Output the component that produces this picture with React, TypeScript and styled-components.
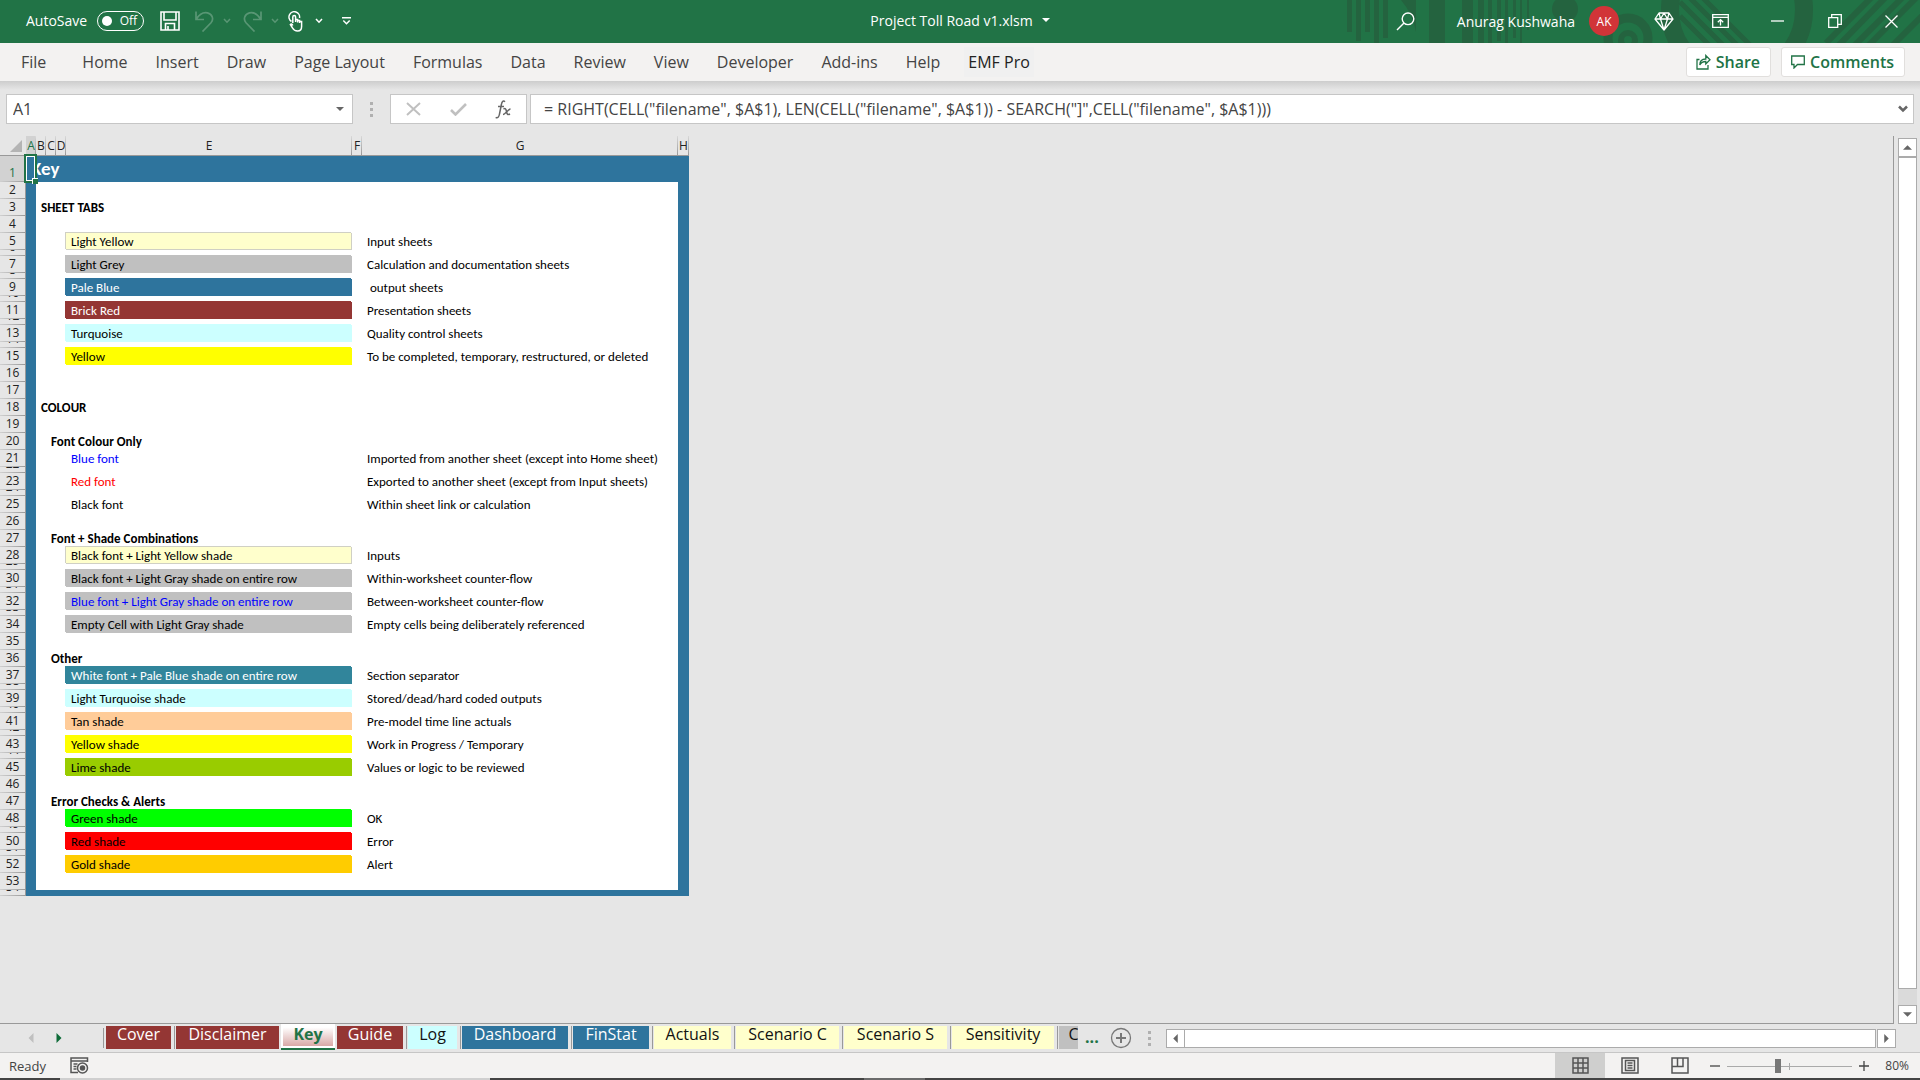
import React from "react";
import styled, { createGlobalStyle, css } from "styled-components";

const green = "#217346";
const blue = "#2e749d";
const brick = "#943634";
const cream = "#ffffcc";
const ui = `"Open Sans", "Noto Sans", sans-serif`;
const cellFont = `Calibri, Carlito, Lato, sans-serif`;

const Global = createGlobalStyle`
  *, *::before, *::after { box-sizing: border-box; }
  body { margin: 0; background: #e6e6e6; font-family: ${ui}; }
  button, input { font-family: inherit; margin: 0; padding: 0; border: 0; background: none; color: inherit; outline: none; }
  svg { display: block; flex: none; }
`;

const Window = styled.div`
  display: flex;
  flex-direction: column;
  height: 100vh;
  overflow: hidden;
`;

/* ---------- title bar ---------- */
const TitleBar = styled.header`
  display: flex;
  flex: none;
  height: 43px;
  background: ${green};
  color: #fff;
  font-size: 14px;
  position: relative;
`;
const Pattern = styled.svg`
  position: absolute;
  top: 0;
  right: 0;
`;
const TitleSide = styled.div<{ $end?: boolean }>`
  position: relative;
  display: flex;
  flex: 1 1 0;
  align-items: center;
  justify-content: ${(p) => (p.$end ? "flex-end" : "flex-start")};
  padding-bottom: 1px;
`;
const AutoSave = styled.label`
  display: flex;
  align-items: center;
  gap: 10px;
  padding-bottom: 1px;
  margin: 0 16px 0 26px;
`;
const Switch = styled.span`
  display: flex;
  align-items: center;
  justify-content: space-between;
  width: 47px;
  height: 20px;
  padding: 0 6px 0 4px;
  border: 1px solid #fff;
  border-radius: 10px;
  font-size: 12px;
`;
const HiddenCheck = styled.input`
  appearance: none;
  width: 10px;
  height: 10px;
  border-radius: 50%;
  background: #fff;
`;
const QuickButton = styled.button<{ $gap?: number; $dim?: boolean }>`
  display: flex;
  align-items: center;
  gap: 9px;
  height: 32px;
  margin-left: ${(p) => p.$gap || 0}px;
  opacity: ${(p) => (p.$dim ? 0.25 : 1)};
`;
const DocTitle = styled.button`
  position: relative;
  display: flex;
  align-items: center;
  gap: 9px;
  padding-bottom: 3px;
  font-size: 14px;
`;
const Account = styled.button`
  display: flex;
  align-items: center;
  gap: 14px;
  margin: 0 16px 0 42px;
  font-size: 14px;
`;
const Avatar = styled.span`
  display: flex;
  align-items: center;
  justify-content: center;
  width: 30px;
  height: 30px;
  border-radius: 50%;
  background: #d13438;
  font-size: 12px;
`;
const WindowButton = styled.button`
  display: flex;
  align-items: center;
  justify-content: center;
  width: 57px;
  height: 42px;
`;

/* ---------- ribbon ---------- */
const Ribbon = styled.nav`
  display: flex;
  flex: none;
  align-items: center;
  height: 38px;
  padding: 0 15px 0 7px;
  background: #f3f2f1;
`;
const RibbonTab = styled.button<{ $first?: boolean; $plugin?: boolean }>`
  height: 30px;
  padding: 0 14px;
  color: #444;
  font-size: 16px;
  line-height: 28px;
  ${(p) => p.$first && css`margin-right: 8px;`}
  ${(p) => p.$plugin && css`
    margin-left: 10px;
    padding: 0 4px;
    color: #222;
    background: #f0f0f0;
  `}
`;
const Spacer = styled.span`
  flex: 1;
`;
const RibbonAction = styled.button`
  display: flex;
  align-items: center;
  gap: 5px;
  height: 30px;
  margin-left: 10px;
  padding: 0 10px 1px 9px;
  border: 1px solid #e1dfdd;
  border-radius: 3px;
  background: #fff;
  color: ${green};
  font-size: 16px;
  font-weight: 600;
`;

/* ---------- formula bar ---------- */
const FormulaRow = styled.div`
  display: flex;
  flex: none;
  padding: 13px 6px 12px;
  background: linear-gradient(#cdcdcd, #e6e6e6 9px);
`;
const Box = styled.div<{ $w?: number }>`
  display: flex;
  align-items: center;
  height: 30px;
  border: 1px solid #c6c6c6;
  background: #fff;
  ${(p) => (p.$w ? css`width: ${p.$w}px;` : css`flex: 1;`)}
`;
const FormulaBox = styled(Box)`
  margin-left: 3px;
`;
const BoxInput = styled.input<{ $pad: number }>`
  flex: 1;
  min-width: 0;
  height: 28px;
  padding: 0 ${(p) => p.$pad}px;
  color: #444;
  font-size: 16px;
`;
const BoxButton = styled.button<{ $w: number }>`
  display: flex;
  align-items: center;
  justify-content: center;
  width: ${(p) => p.$w}px;
  height: 28px;
`;
const Grip = styled.span<{ $w: number }>`
  display: flex;
  flex-direction: column;
  align-items: center;
  justify-content: center;
  gap: 3px;
  width: ${(p) => p.$w}px;
  &::before, &::after, & > i { content: ""; width: 3px; height: 3px; background: #b0b0b0; }
`;

/* ---------- worksheet ---------- */
const Body = styled.main`
  display: flex;
  flex: 1;
  min-height: 0;
  padding-right: 3px;
`;
const Pane = styled.div`
  flex: 1;
  min-width: 0;
  overflow: hidden;
  border-right: 1px solid #999;
  border-bottom: 1px solid #999;
`;
const SheetHolder = styled.div`
  position: relative;
`;
const Sheet = styled.table`
  width: 689px;
  table-layout: fixed;
  border-collapse: separate;
  border-spacing: 0;
  color: #000;
  font-family: ${cellFont};
  font-size: 13px;
  line-height: 17px;
  td, th { padding: 0; font-weight: 400; text-align: left; white-space: nowrap; vertical-align: bottom; }
`;
const ColHead = styled.th<{ $on?: boolean }>`
  height: 20px;
  font-family: ${ui};
  font-size: 12px;
  border-bottom: 1px solid #999;
  color: ${(p) => (p.$on ? green : "#222")};
  background: linear-gradient(#d8d8d8, #999) right / 1px 100% no-repeat ${(p) => (p.$on ? "#d2d2d2" : "#e6e6e6")};
  & > span { display: flex; justify-content: center; line-height: 18px; }
`;
const Corner = styled.th`
  height: 20px;
  border-bottom: 1px solid #999;
  & > svg { margin: 0 0 3px 10px; }
`;
const RowHead = styled.th<{ $on?: boolean }>`
  font-family: ${ui};
  font-size: 12px;
  color: ${(p) => (p.$on ? green : "#222")};
  border-right: 1px solid #999;
  background: linear-gradient(90deg, #d0d0d0, #9a9a9a) bottom / 100% 1px no-repeat ${(p) => (p.$on ? "#d2d2d2" : "#e6e6e6")};
`;
const RowNumber = styled.span<{ $h: number }>`
  display: flex;
  align-items: flex-end;
  justify-content: center;
  height: ${(p) => p.$h}px;
  overflow: hidden;
  line-height: 18px;
`;
const Blue = styled.td`
  background: ${blue};
`;
const SheetTitle = styled(Blue)`
  && { padding: 0 0 3px 5px; font-weight: 700; }
  color: #fff;
  font-size: 19px;
  line-height: 20px;
`;
const White = styled.td`
  background: #fff;
`;
const Heading = styled(White)`
  && { padding-left: 5px; font-weight: 700; }
`;
const Swatch = styled.td<{ $bg: string; $fg: string; $line?: string }>`
  && { padding-left: 5px; }
  background: ${(p) => p.$bg};
  color: ${(p) => p.$fg};
  box-shadow: ${(p) =>
    p.$bg === "#fff" ? "none" : `-1px -1px 0 ${p.$line || p.$bg}, inset -1px -1px 0 ${p.$line || p.$bg}`};
`;
const Note = styled(White)`
  && { padding-left: 5px; white-space: pre; }
`;
const Selection = styled.div`
  position: absolute;
  left: 24px;
  top: 18px;
  width: 13px;
  height: 29px;
  border: 2px solid ${green};
  background: ${blue};
  box-shadow: inset 0 0 0 1px #fff;
  &::after {
    content: "";
    position: absolute;
    right: -3px;
    bottom: -3px;
    width: 6px;
    height: 6px;
    background: ${green};
    border: solid #fff;
    border-width: 1px 0 0 1px;
  }
`;

/* ---------- scroll bars ---------- */
const VScroll = styled.div`
  display: flex;
  flex-direction: column;
  width: 19px;
  margin: 2px 0 0 4px;
  background: #dadada;
`;
const ScrollButton = styled.button`
  display: flex;
  flex: none;
  align-items: center;
  justify-content: center;
  width: 19px;
  height: 19px;
  border: 1px solid #ababab;
  background: #fff;
`;
const VThumb = styled.div`
  flex: 1;
  margin-bottom: 16px;
  border: 1px solid #ababab;
  background: #fff;
`;
const HScroll = styled.div`
  display: flex;
  flex: 1;
  gap: 1px;
`;
const HThumb = styled.div`
  flex: 1;
  margin-left: -2px;
  border: 1px solid #ababab;
  background: #fff;
`;

/* ---------- sheet tabs ---------- */
const TabRow = styled.div`
  display: flex;
  flex: none;
  align-items: center;
  height: 29px;
  padding-right: 24px;
  border-bottom: 1px solid #c6c6c6;
`;
const TabNav = styled.div`
  display: flex;
  width: 104px;
  padding-left: 17px;
  border-right: 1px solid #999;
`;
const TabArrow = styled.button`
  display: flex;
  align-items: center;
  justify-content: center;
  width: 28px;
  height: 20px;
`;
const Tabs = styled.div`
  display: flex;
  width: 974px;
  height: 29px;
  overflow: hidden;
`;
const Tab = styled.button<{ $bg: string; $fg: string; $w: number }>`
  flex: none;
  width: ${(p) => p.$w}px;
  height: 23px;
  margin: 2px 3px 0 2px;
  padding-bottom: 5px;
  background: ${(p) => p.$bg};
  color: ${(p) => p.$fg};
  font-size: 16px;
  line-height: 17px;
  box-shadow: 3px 0 0 #e6e6e6, 4px 0 0 #999;
`;
const ActiveTab = styled(Tab)`
  height: 24px;
  margin: 0 0 0 -1px;
  padding-bottom: 1px;
  border: solid #fff;
  border-width: 0 2px 2px;
  background: linear-gradient(#fff 15%, #d9a9a7);
  color: ${green};
  font-weight: 700;
  box-shadow: 0 2px 0 ${green};
`;
const More = styled.span`
  width: 32px;
  padding: 0 0 2px 7px;
  color: ${green};
  font-size: 16px;
  font-weight: 700;
`;
const AddSheet = styled.button`
  width: 22px;
  height: 22px;
`;

/* ---------- status bar ---------- */
const Status = styled.footer`
  display: flex;
  flex: none;
  align-items: center;
  height: 25px;
  padding: 0 11px 0 9px;
  background: #f3f2f1;
  color: #444;
  font-size: 13px;
`;
const MacroButton = styled.button`
  margin-left: 24px;
`;
const ViewButton = styled.button<{ $on?: boolean }>`
  display: flex;
  align-items: center;
  justify-content: center;
  width: 50px;
  height: 25px;
  background: ${(p) => (p.$on ? "#cfcfce" : "none")};
`;
const ZoomStep = styled.button`
  display: flex;
  align-items: center;
  justify-content: center;
  width: 19px;
  height: 24px;
`;
const Zoom = styled.input`
  appearance: none;
  width: 125px;
  height: 14px;
  margin: 0 2px 0 3px;
  background:
    linear-gradient(#aaa, #aaa) 62px 4px / 1px 7px no-repeat,
    linear-gradient(#aaa, #aaa) 0 7px / 100% 1px no-repeat;
  &::-webkit-slider-thumb {
    appearance: none;
    width: 6px;
    height: 14px;
    background: #777;
  }
`;
const ZoomLabel = styled.output`
  width: 36px;
  font-size: 12px;
  text-align: right;
`;
const Taskbar = styled.div`
  flex: none;
  height: 2px;
  background: linear-gradient(90deg, #444 60px, #cfcfcf 60px 490px, #444 490px 864px, #6b6b6b 864px 925px, #444 925px);
`;

/* ---------- data ---------- */
type Row = { n: number; b?: string; c?: string; e?: string; g?: string; bg?: string; fg?: string; line?: string; thin?: boolean };

const grey = "#c0c0c0";
const content: Record<number, Omit<Row, "n">> = {
  3: { b: "SHEET TABS" },
  5: { e: "Light Yellow", g: "Input sheets", bg: cream, line: "#d0d0c4" },
  7: { e: "Light Grey", g: "Calculation and documentation sheets", bg: grey },
  9: { e: "Pale Blue", g: " output sheets", bg: blue, fg: "#fff" },
  11: { e: "Brick Red", g: "Presentation sheets", bg: brick, fg: "#fff" },
  13: { e: "Turquoise", g: "Quality control sheets", bg: "#ccffff" },
  15: { e: "Yellow", g: "To be completed, temporary, restructured, or deleted", bg: "#ffff00" },
  18: { b: "COLOUR" },
  20: { c: "Font Colour Only" },
  21: { e: "Blue font", g: "Imported from another sheet (except into Home sheet)", fg: "#0000ff" },
  23: { e: "Red font", g: "Exported to another sheet (except from Input sheets)", fg: "#ff0000" },
  25: { e: "Black font", g: "Within sheet link or calculation" },
  27: { c: "Font + Shade Combinations" },
  28: { e: "Black font + Light Yellow shade", g: "Inputs", bg: cream, line: "#d0d0c4" },
  30: { e: "Black font + Light Gray shade on entire row", g: "Within-worksheet counter-flow", bg: grey },
  32: { e: "Blue font + Light Gray shade on entire row", g: "Between-worksheet counter-flow", bg: grey, fg: "#0000ff" },
  34: { e: "Empty Cell with Light Gray shade", g: "Empty cells being deliberately referenced", bg: grey },
  36: { c: "Other" },
  37: { e: "White font + Pale Blue shade on entire row", g: "Section separator", bg: "#31859b", fg: "#fff" },
  39: { e: "Light Turquoise shade", g: "Stored/dead/hard coded outputs", bg: "#ccffff" },
  41: { e: "Tan shade", g: "Pre-model time line actuals", bg: "#ffcc99" },
  43: { e: "Yellow shade", g: "Work in Progress / Temporary", bg: "#ffff00" },
  45: { e: "Lime shade", g: "Values or logic to be reviewed", bg: "#99cc00" },
  47: { c: "Error Checks & Alerts" },
  48: { e: "Green shade", g: "OK", bg: "#00ff00" },
  50: { e: "Red shade", g: "Error", bg: "#ff0000" },
  52: { e: "Gold shade", g: "Alert", bg: "#ffcc00" },
};
const thinRows = new Set([6, 8, 10, 12, 14, 22, 24, 29, 31, 33, 38, 40, 42, 44, 49, 51]);
const rows: Row[] = Array.from({ length: 52 }, (_, i) => ({ n: i + 2, thin: thinRows.has(i + 2), ...content[i + 2] }));

const ribbonTabs = ["File", "Home", "Insert", "Draw", "Page Layout", "Formulas", "Data", "Review", "View", "Developer", "Add-ins", "Help", "EMF Pro"];

const sheetTabs = [
  { name: "Cover", bg: brick, fg: "#fff", w: 65 },
  { name: "Disclaimer", bg: brick, fg: "#fff", w: 103 },
  { name: "Key", bg: "#fff", fg: green, w: 54 },
  { name: "Guide", bg: brick, fg: "#fff", w: 66 },
  { name: "Log", bg: "#ccffff", fg: "#111", w: 49 },
  { name: "Dashboard", bg: blue, fg: "#fff", w: 106 },
  { name: "FinStat", bg: blue, fg: "#fff", w: 76 },
  { name: "Actuals", bg: cream, fg: "#111", w: 77 },
  { name: "Scenario C", bg: cream, fg: "#111", w: 103 },
  { name: "Scenario S", bg: cream, fg: "#111", w: 103 },
  { name: "Sensitivity", bg: cream, fg: "#111", w: 102 },
  { name: "C", bg: grey, fg: "#111", w: 29 },
];

/* ---------- icons ---------- */
const Chevron = ({ color = "#fff" }: { color?: string }) => (
  <svg width="8" height="6" viewBox="0 0 8 6" fill="none" stroke={color} strokeWidth="1.5"><path d="M1 1l3 3.2L7 1" /></svg>
);
const Triangle = ({ dir, color = "#666", size = 10 }: { dir: "up" | "down" | "left" | "right"; color?: string; size?: number }) => {
  const d = { up: "M0 7.5h10L5 2.5z", down: "M0 2.5h10L5 7.5z", left: "M7.5 0v10L2.5 5z", right: "M2.5 0v10L7.5 5z" }[dir];
  return <svg width={size} height={size} viewBox="0 0 10 10" fill={color}><path d={d} /></svg>;
};
const UndoArrow = ({ flip }: { flip?: boolean }) => (
  <svg width="19" height="21" viewBox="0 0 19 21" fill="none" stroke="#fff" strokeWidth="1.700">
    <path transform={flip ? "matrix(-1 0 0 1 19 0)" : undefined} d="M1 .5v8h8M1.500 8C4.500 3 8.500 1 12.500 1.800c5 1.200 6.500 6.500 3.500 10L7.500 20.500" />
  </svg>
);

const TitlePattern = () => (
  <Pattern width="580" height="43" viewBox="1340 0 580 43" fill="#24633f" stroke="none" aria-hidden="true">
    <path d="M1347 0h5v32h-5zM1356 0h5v41h-5zM1365 0h5v32h-5zM1374 0h5v43h-5zM1383 0h5v38h-5z" />
    <path d="M1401 0h15v32q-3-18-15-32zM1429 0h16v43h-16zM1462 0h11v43h-11zM1478 0h6v43h-6zM1488 0h4v43h-4zM1497 0h4v41h-4zM1505 0h3v43h-3zM1513 0h3v38h-3zM1520 0h2v43h-2zM1527 0h2v30h-2z" />
    <circle cx="1565" cy="9" r="13" />
    <g fill="none" stroke="#24633f">
      <circle cx="1628" cy="38" r="20" strokeWidth="9" />
      <circle cx="1628" cy="40" r="7" strokeWidth="6" />
      <circle cx="1737" cy="10" r="67" strokeWidth="18" />
      <path strokeWidth="5" d="M1680 16l34 34M1680 2l44 44M1690-2l48 48M1703-2l48 48" />
      <path strokeWidth="6" d="M1826 43l45-45M1838 46l47-48M1854 46l48-48M1868 46l48-48M1892 46l40-40" />
    </g>
  </Pattern>
);

const SheetGrid = () => (
  <Sheet>
    <colgroup>
      {[26, 10, 10, 10, 10, 286, 10, 316, 11].map((w, i) => <col key={i} width={w} />)}
    </colgroup>
    <thead>
      <tr>
        <Corner aria-label="Select all"><svg width="12" height="12"><path d="M12 0v12H0z" fill="#b4b4b4" /></svg></Corner>
        {"ABCDEFGH".split("").map((l) => <ColHead key={l} scope="col" $on={l === "A"}><span>{l}</span></ColHead>)}
      </tr>
    </thead>
    <tbody>
      <tr>
        <RowHead scope="row" $on><RowNumber $h={26}>1</RowNumber></RowHead>
        <SheetTitle colSpan={8}>Key</SheetTitle>
      </tr>
      {rows.map((r) => (
        <tr key={r.n}>
          <RowHead scope="row"><RowNumber $h={r.thin ? 6 : 17}>{r.n}</RowNumber></RowHead>
          <Blue />
          {r.b || r.c ? (
            <>
              {r.c && <White />}
              <Heading colSpan={r.c ? 5 : 6}>{r.b || r.c}</Heading>
            </>
          ) : r.e ? (
            <>
              <White colSpan={3} />
              <Swatch $bg={r.bg || "#fff"} $fg={r.fg || "#000"} $line={r.line}>{r.e}</Swatch>
              <White />
              <Note>{r.g}</Note>
            </>
          ) : (
            <White colSpan={6} />
          )}
          <Blue />
        </tr>
      ))}
      <tr>
        <RowHead scope="row"><RowNumber $h={6}>54</RowNumber></RowHead>
        <Blue colSpan={8} />
      </tr>
    </tbody>
  </Sheet>
);

export default function App() {
  return (
    <Window>
      <Global />
      <TitleBar>
        <TitlePattern />
        <TitleSide>
          <AutoSave>
            AutoSave
            <Switch><HiddenCheck type="checkbox" />Off</Switch>
          </AutoSave>
          <QuickButton aria-label="Save">
            <svg width="20" height="20" viewBox="0 0 20 20" fill="none" stroke="#fff" strokeWidth="1.6"><path d="M1 1h18v18H1zM4 1v8h12V1M5.500 19v-6.500h9V19M8 15v4" /></svg>
          </QuickButton>
          <QuickButton $gap={15} $dim aria-label="Undo"><UndoArrow /><Chevron /></QuickButton>
          <QuickButton $gap={12} $dim aria-label="Redo"><UndoArrow flip /><Chevron /></QuickButton>
          <QuickButton $gap={9} aria-label="Touch mode">
            <svg width="16" height="21" viewBox="0 0 16 21" fill="none" stroke="#fff" strokeWidth="1.5">
              <path d="M3.500 10.500A5.300 5.300 0 1 1 11.500 7M4.800 12V6a1.400 1.400 0 0 1 2.800 0v5M7.600 8.500h2v3M9.600 9.500h2v2.500M11.600 10.500h2v5c0 3-1.500 4.500-4 4.500-3 0-4-1-5-3l-2.200-3.500c1-1 2 0 2.400 1" />
            </svg>
          </QuickButton>
          <QuickButton $gap={11} aria-label="Touch mode options"><Chevron /></QuickButton>
          <QuickButton $gap={19} aria-label="Customize toolbar">
            <svg width="9" height="8" viewBox="0 0 9 8" fill="none" stroke="#fff" strokeWidth="1.500"><path d="M0 .8h9M1.300 3.500l3.200 3.200 3.200-3.200" /></svg>
          </QuickButton>
        </TitleSide>
        <DocTitle>Project Toll Road v1.xlsm<Triangle dir="down" color="#fff" size={8} /></DocTitle>
        <TitleSide $end>
          <QuickButton aria-label="Search">
            <svg width="19" height="19" viewBox="0 0 19 19" fill="none" stroke="#fff" strokeWidth="1.400"><circle cx="12" cy="6.800" r="5.800" /><path d="M8 11L1 18" /></svg>
          </QuickButton>
          <Account>Anurag Kushwaha<Avatar>AK</Avatar></Account>
          <WindowButton aria-label="Premium">
            <svg width="20" height="19" viewBox="0 0 20 19" fill="none" stroke="#fff" strokeWidth="1.300" strokeLinejoin="round"><path d="M5 1h10l4 6-9 11L1 7zM1 7h18M10 1L6.500 7 10 18l3.500-11zM5 1l1.500 6M15 1l-1.500 6" /></svg>
          </WindowButton>
          <WindowButton aria-label="Ribbon display options">
            <svg width="17" height="14" viewBox="0 0 17 14" fill="none" stroke="#fff" strokeWidth="1.300"><path d="M.7.7h15.600v12.600H.7zM.7 3.300h15.600M8.500 11.500V5.800M5.800 8.200l2.700-2.600 2.700 2.600" /></svg>
          </WindowButton>
          <WindowButton aria-label="Minimize"><svg width="13" height="2"><path d="M0 1h13" stroke="#fff" strokeWidth="1.300" /></svg></WindowButton>
          <WindowButton aria-label="Restore">
            <svg width="14" height="14" viewBox="0 0 14 14" fill="none" stroke="#fff" strokeWidth="1.300"><path d="M.7 3.700h9v9.600h-9zM3.700 3.500V.7h9.600v9.600H10" /></svg>
          </WindowButton>
          <WindowButton aria-label="Close"><svg width="13" height="13" viewBox="0 0 13 13" stroke="#fff" strokeWidth="1.300"><path d="M.5.5l12 12M12.500.5l-12 12" /></svg></WindowButton>
        </TitleSide>
      </TitleBar>

      <Ribbon>
        {ribbonTabs.map((t) => <RibbonTab key={t} $first={t === "File"} $plugin={t === "EMF Pro"}>{t}</RibbonTab>)}
        <Spacer />
        <RibbonAction>
          <svg width="15" height="16" viewBox="0 0 15 16" fill="none" stroke={green} strokeWidth="1.300"><path d="M3.500 5.500H1v9.500h11v-4M3.800 11c0-4 2-6 6-6V1.500l4.200 4.300L9.800 10V7.500C7 7.500 5 8.500 3.800 11z" /></svg>
          Share
        </RibbonAction>
        <RibbonAction>
          <svg width="14" height="14" viewBox="0 0 14 14" fill="none" stroke={green} strokeWidth="1.300"><path d="M.7 1h12.600v8.500H6.500L3 13V9.500H.7z" /></svg>
          Comments
        </RibbonAction>
      </Ribbon>

      <FormulaRow>
        <Box $w={347}>
          <BoxInput $pad={6} aria-label="Name box" defaultValue="A1" />
          <BoxButton $w={24} aria-label="Name box options"><Triangle dir="down" size={8} /></BoxButton>
        </Box>
        <Grip $w={37}><i /></Grip>
        <Box $w={137}>
          <BoxButton $w={45} aria-label="Cancel"><svg width="15" height="14" viewBox="0 0 15 14" stroke="#c0c0c0" strokeWidth="2"><path d="M1 1l13 12M14 1L1 13" /></svg></BoxButton>
          <BoxButton $w={45} aria-label="Enter"><svg width="17" height="13" viewBox="0 0 17 13" fill="none" stroke="#c0c0c0" strokeWidth="2.600"><path d="M1 7l4.500 4.500L16 1" /></svg></BoxButton>
          <BoxButton $w={45} aria-label="Insert function">
            <svg width="17" height="19" viewBox="0 0 17 19" fill="none" stroke="#666" strokeWidth="1.500"><path d="M10 1.800C8-.2 6.800 2 6.300 5L4.500 14c-.5 3-2 4.500-3.800 3.300M3 6.500h6M8.500 9c2-1 2.500 0 3 2.500s1 4 3.500 2.500M15.500 9c-2 0-5.500 5.500-7.500 5.500" /></svg>
          </BoxButton>
        </Box>
        <FormulaBox>
          <BoxInput $pad={13} aria-label="Formula" defaultValue={'= RIGHT(CELL("filename", $A$1), LEN(CELL("filename", $A$1)) - SEARCH("]",CELL("filename", $A$1)))'} />
          <BoxButton $w={20} aria-label="Expand formula bar"><svg width="10" height="8" viewBox="0 0 10 8" fill="none" stroke="#666" strokeWidth="2.500"><path d="M1 1.500l4 4 4-4" /></svg></BoxButton>
        </FormulaBox>
      </FormulaRow>

      <Body>
        <Pane>
          <SheetHolder>
            <SheetGrid />
            <Selection />
          </SheetHolder>
        </Pane>
        <VScroll>
          <ScrollButton aria-label="Scroll up"><Triangle dir="up" size={9} /></ScrollButton>
          <VThumb />
          <ScrollButton aria-label="Scroll down"><Triangle dir="down" size={9} /></ScrollButton>
        </VScroll>
      </Body>

      <TabRow>
        <TabNav>
          <TabArrow aria-label="Previous sheet"><Triangle dir="left" color="#c0c0c0" /></TabArrow>
          <TabArrow aria-label="Next sheet"><Triangle dir="right" color="#0e6b38" /></TabArrow>
        </TabNav>
        <Tabs>
          {sheetTabs.map(({ name, bg, fg, w }) =>
            name === "Key"
              ? <ActiveTab key={name} $bg={bg} $fg={fg} $w={w}>{name}</ActiveTab>
              : <Tab key={name} $bg={bg} $fg={fg} $w={w}>{name}</Tab>
          )}
        </Tabs>
        <More>...</More>
        <AddSheet aria-label="New sheet">
          <svg width="22" height="22" viewBox="0 0 22 22" fill="none" stroke="#777" strokeWidth="1.300"><circle cx="11" cy="11" r="9.500" /><path d="M6 11h10M11 6v10" strokeWidth="2" /></svg>
        </AddSheet>
        <Grip $w={34}><i /></Grip>
        <HScroll>
          <ScrollButton aria-label="Scroll left"><Triangle dir="left" size={9} /></ScrollButton>
          <HThumb />
          <ScrollButton aria-label="Scroll right"><Triangle dir="right" size={9} /></ScrollButton>
        </HScroll>
      </TabRow>

      <Status>
        Ready
        <MacroButton aria-label="Record macro">
          <svg width="19" height="17" viewBox="0 0 19 17" fill="none" stroke="#555" strokeWidth="1.500"><path d="M8 15.500H1V1h16.500v4M1 4h16.500M3.500 7h4M3.500 9.500h3M3.500 12h3" /><circle cx="12.500" cy="11" r="5" /><circle cx="12.500" cy="11" r="2" fill="#555" /></svg>
        </MacroButton>
        <Spacer />
        <ViewButton $on aria-label="Normal view">
          <svg width="17" height="17" viewBox="0 0 17 17" fill="none" stroke="#555" strokeWidth="1.500"><path d="M1 1h15v15H1zM1 6h15M1 11h15M6 1v15M11 1v15" /></svg>
        </ViewButton>
        <ViewButton aria-label="Page layout view">
          <svg width="18" height="17" viewBox="0 0 18 17" fill="none" stroke="#555" strokeWidth="1.500"><path d="M1 1h16v15H1zM4.500 3.500h9v10h-9zM6.500 6h5M6.500 8.500h5M6.500 11h5" /></svg>
        </ViewButton>
        <ViewButton aria-label="Page break view">
          <svg width="18" height="17" viewBox="0 0 18 17" fill="none" stroke="#555" strokeWidth="1.500"><path d="M1 1h16v15H1zM1 9.500h11V1M6.500 1v8.500" /></svg>
        </ViewButton>
        <ZoomStep aria-label="Zoom out"><svg width="10" height="10"><path d="M0 5h10" stroke="#444" strokeWidth="1.300" /></svg></ZoomStep>
        <Zoom type="range" min={0} max={200} defaultValue={80} aria-label="Zoom" />
        <ZoomStep aria-label="Zoom in"><svg width="10" height="10"><path d="M0 5h10M5 0v10" stroke="#444" strokeWidth="1.300" /></svg></ZoomStep>
        <ZoomLabel>80%</ZoomLabel>
      </Status>
      <Taskbar />
    </Window>
  );
}
